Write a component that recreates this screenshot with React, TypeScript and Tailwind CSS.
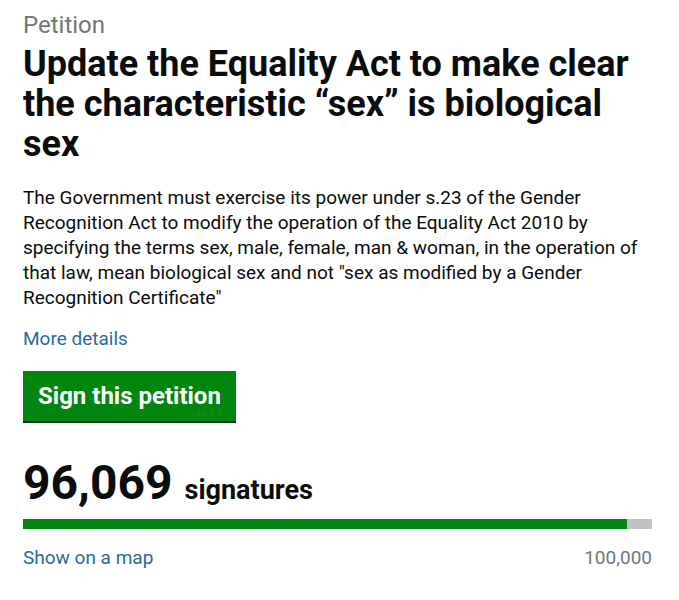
export default function App() {
  const count = 96069
  const target = 100000
  const pct = (count / target) * 100

  return (
    <div className="bg-white min-h-[600px] px-[23px] pt-[10px] text-[#0b0c0c] font-['Roboto',sans-serif]">
      <p className="text-[24px] leading-[30px] text-[#6f777b]">Petition</p>
      <h1 className="text-[36px] leading-[40px] font-bold mt-[4px]">
        Update the Equality Act to make clear the characteristic “sex” is biological sex
      </h1>

      <p className="text-[19px] leading-[25px] mt-[21px] w-[625px]">
        The Government must exercise its power under s.23 of the Gender Recognition Act to modify
        the operation of the Equality Act 2010 by specifying the terms sex, male, female, man &amp;
        woman, in the operation of that law, mean biological sex and not "sex as modified by a
        Gender Recognition Certificate"
      </p>

      <a className="block mt-[16px] text-[19px] leading-[25px] text-[#2b6a98]">More details</a>

      <button className="mt-[20px] h-[50px] px-[15px] bg-[#00850f] text-white text-[24px] font-bold shadow-[0_2px_0_#003618]">
        Sign this petition
      </button>

      <div className="mt-[34px] flex items-baseline gap-[12px]">
        <span className="text-[48px] leading-[56px] font-bold">96,069</span>
        <span className="text-[27px] font-bold">signatures</span>
      </div>

      <div className="mt-[8px] h-[10px] bg-[#bfc1c3] w-[629px]">
        <div className="h-full bg-[#00850f]" style={{ width: `${pct}%` }} />
      </div>

      <div className="mt-[16px] flex justify-between w-[629px] text-[19px] leading-[25px]">
        <a className="text-[#2b6a98]">Show on a map</a>
        <span className="text-[#6f777b]">100,000</span>
      </div>
    </div>
  )
}
